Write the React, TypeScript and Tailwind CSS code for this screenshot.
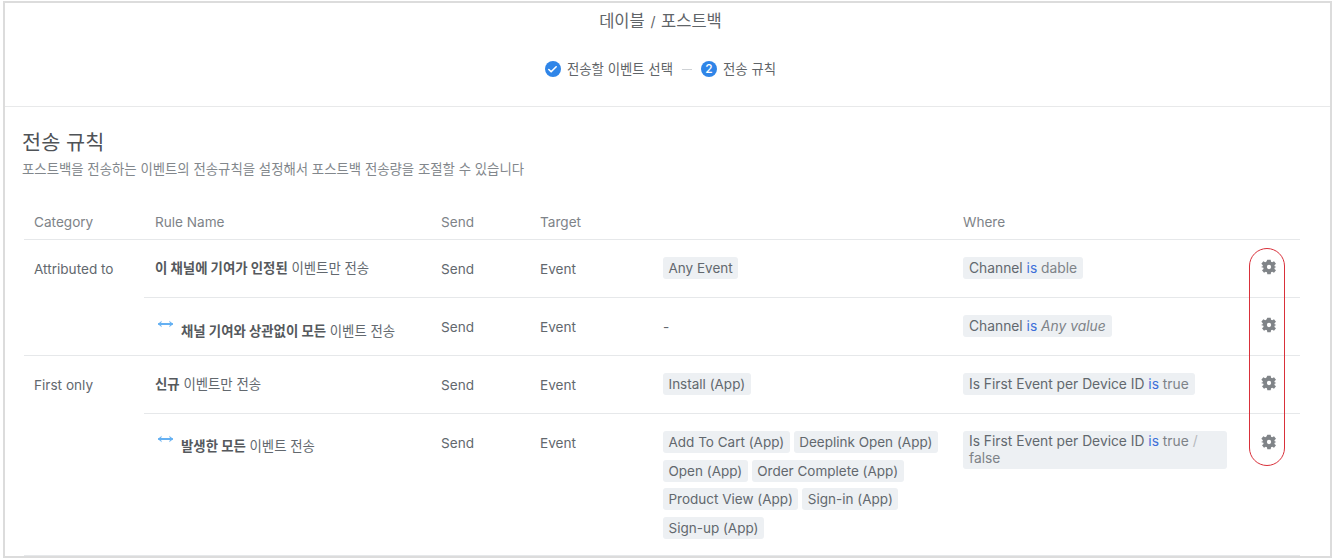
import { Check } from "lucide-react";

function Chip({ children, wide }: { children: React.ReactNode; wide?: boolean }) {
  return (
    <span
      className={`inline-block rounded-[3px] bg-[#edf0f3] leading-[22px] text-[#62686e] ${
        wide ? "px-[6px] text-[13.8px]" : "px-[5.5px] text-[13.5px]"
      }`}
    >
      {children}
    </span>
  );
}

function Gear() {
  return (
    <svg viewBox="0 0 24 24" className="h-[16px] w-[16px]" fill="#808488">
      <path
        fillRule="evenodd"
        d="M9.5 1h5l.6 3.1 1.7.8 2.7-1.6 3 3.9-2.3 2 .2 1.8 2.6 1-.1 0v.1l-2.5 1-.2 1.8 2.3 2-3 3.9-2.7-1.6-1.7.8-.6 3h-5l-.6-3-1.7-.8-2.7 1.6-3-3.9 2.3-2-.2-1.8L0 12l2.6-1 .2-1.8-2.3-2 3-3.9 2.7 1.6 1.7-.8zM12 8.8a3.2 3.2 0 1 0 0 6.4 3.2 3.2 0 0 0 0-6.4z"
      />
    </svg>
  );
}

function Arrow() {
  return (
    <svg viewBox="0 0 18 8" className="mt-[-14px] mr-[7px] ml-[2px] h-[8px] w-[17px] shrink-0" fill="none" stroke="#64b0f2" strokeWidth="2" strokeLinecap="round">
      <path d="M2 4h14" />
      <path d="M4.5 1.5L1.5 4l3 2.5M13.5 1.5l3 2.5-3 2.5" fill="#64b0f2" strokeWidth="1" />
    </svg>
  );
}

type RowProps = {
  name: React.ReactNode;
  events: React.ReactNode;
  where: React.ReactNode;
  height: string;
  namePad: string;
  gearPad?: string;
  last?: boolean;
};

function Row({ name, events, where, height, namePad, gearPad = "pt-[19px]", last }: RowProps) {
  return (
    <div className={`flex ${height} ${last ? "" : "border-b border-[#e6e8ea]"} text-[13.6px] text-[#62686e]`}>
      <div className={`flex w-[297px] items-center self-start pl-[11px] ${namePad} text-[13.4px] leading-[22px]`}>
        {name}
      </div>
      <div className="w-[99px] pt-[18px] leading-[22px]">Send</div>
      <div className="w-[123px] pt-[18px] leading-[22px]">Event</div>
      <div className="w-[300px] pt-[17px]">{events}</div>
      <div className="w-[264px] pt-[17px]">{where}</div>
      <div className={`flex flex-1 justify-end pr-[23px] ${gearPad}`}>
        <Gear />
      </div>
    </div>
  );
}

export default function App() {
  return (
    <div
      className="relative h-[560px] w-[1335px] overflow-hidden bg-white"
      style={{ fontFamily: 'Inter, "Noto Sans CJK KR", sans-serif' }}
    >
      <div className="mx-[3px] mt-px h-[557px] border-x-2 border-y-2 border-[#dcdcdc]">
        <header className="h-[104px] border-b border-[#e8e9ea] pr-[14px]">
          <h1 className="pt-[6px] text-center text-[16.5px] leading-[24px] text-[#5f6468]">
            데이블 <span className="mx-[1px] text-[14px]">/</span> 포스트백
          </h1>
          <div className="mt-[24px] flex items-center justify-center text-[13.4px] leading-[22px] text-[#5f6468]">
            <span className="mr-[6px] flex h-[16px] w-[16px] items-center justify-center rounded-full bg-[#2f85e8]">
              <Check size={11} strokeWidth={3.5} color="white" />
            </span>
            전송할 이벤트 선택
            <span className="mx-[9px] h-px w-[10px] bg-[#cfd2d5]" />
            <span className="mr-[6px] flex h-[16px] w-[16px] items-center justify-center rounded-full bg-[#2f85e8] text-[12px] font-medium text-white">
              2
            </span>
            전송 규칙
          </div>
        </header>

        <section className="px-[17px]">
          <h2 className="mt-[22px] text-[20.8px] leading-[28px] text-[#4f5357]">전송 규칙</h2>
          <p className="mt-[2px] text-[13.4px] leading-[20px] text-[#82878c]">
            포스트백을 전송하는 이벤트의 전송규칙을 설정해서 포스트백 전송량을 조절할 수 있습니다
          </p>

          <div className="mt-[32px] ml-[2px] w-[1276px]">
            <div className="flex h-[29px] items-start border-b border-[#e6e8ea] pl-[10px] text-[13.6px] leading-[22px] text-[#7e8388]">
              <div className="w-[121px]">Category</div>
              <div className="w-[286px]">Rule Name</div>
              <div className="w-[99px]">Send</div>
              <div className="w-[123px]">Target</div>
              <div className="w-[300px]" />
              <div>Where</div>
            </div>

            <div className="flex border-b border-[#e6e8ea]">
              <div className="w-[120px] pl-[10px] pt-[18px] text-[13.6px] leading-[22px] text-[#62686e]">Attributed to</div>
              <div className="flex-1">
                <Row
                  height="h-[58px]"
                  namePad="pt-[17px]"
                  name={<span><b className="font-bold text-[#55595d]">이 채널에 기여가 인정된</b> 이벤트만 전송</span>}
                  events={<Chip>Any Event</Chip>}
                  where={<Chip wide>Channel <span className="text-[#3d6fd9]">is</span> <span className="text-[#7e8388]">dable</span></Chip>}
                />
                <Row
                  last
                  height="h-[57px]"
                  namePad="pt-[22px]"
                  name={<><Arrow /><span><b className="font-bold text-[#55595d]">채널 기여와 상관없이 모든</b> 이벤트 전송</span></>}
                  events={<span className="block pt-[1px] leading-[22px]">-</span>}
                  where={<Chip wide>Channel <span className="text-[#3d6fd9]">is</span> <i className="text-[#7e8388]">Any value</i></Chip>}
                />
              </div>
            </div>

            <div className="flex border-b border-[#e6e8ea]">
              <div className="w-[120px] pl-[10px] pt-[18px] text-[13.6px] leading-[22px] text-[#62686e]">First only</div>
              <div className="flex-1">
                <Row
                  height="h-[58px]"
                  namePad="pt-[17px]"
                  name={<span><b className="font-bold text-[#55595d]">신규</b> 이벤트만 전송</span>}
                  events={<Chip>Install (App)</Chip>}
                  where={<Chip wide>Is First Event per Device ID <span className="text-[#3d6fd9]">is</span> <span className="text-[#7e8388]">true</span></Chip>}
                />
                <Row
                  last
                  height="h-[141px]"
                  namePad="pt-[21px]"
                  gearPad="pt-[20px]"
                  name={<><Arrow /><span><b className="font-bold text-[#55595d]">발생한 모든</b> 이벤트 전송</span></>}
                  events={
                    <div className="flex flex-wrap gap-x-[4px] gap-y-[6.6px]">
                      <Chip>Add To Cart (App)</Chip>
                      <Chip>Deeplink Open (App)</Chip>
                      <Chip>Open (App)</Chip>
                      <Chip>Order Complete (App)</Chip>
                      <Chip>Product View (App)</Chip>
                      <Chip>Sign-in (App)</Chip>
                      <Chip>Sign-up (App)</Chip>
                    </div>
                  }
                  where={
                    <div className="w-[264px] rounded-[3px] bg-[#edf0f3] px-[6px] py-[2px] text-[13.8px] leading-[17px]">
                      Is First Event per Device ID <span className="text-[#3d6fd9]">is</span>{" "}
                      <span className="text-[#7e8388]">true</span> <span className="text-[#b5b9bd]">/</span>{" "}
                      <span className="text-[#7e8388]">false</span>
                    </div>
                  }
                />
              </div>
            </div>
          </div>
        </section>
      </div>

      {/* hand-drawn annotation over the gear column */}
      <div className="absolute left-[1249px] top-[248px] h-[218px] w-[36px] rounded-full border border-[#d9303a]" />
    </div>
  );
}
